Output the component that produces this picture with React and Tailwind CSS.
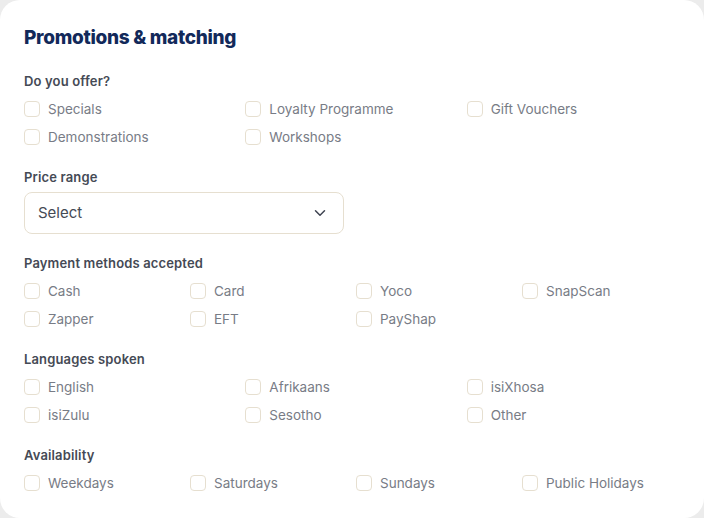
import React from 'react';
import { ChevronDown } from 'lucide-react';

const sections = {
  offer: ['Specials', 'Loyalty Programme', 'Gift Vouchers', 'Demonstrations', 'Workshops'],
  payment: ['Cash', 'Card', 'Yoco', 'SnapScan', 'Zapper', 'EFT', 'PayShap'],
  languages: ['English', 'Afrikaans', 'isiXhosa', 'isiZulu', 'Sesotho', 'Other'],
  availability: ['Weekdays', 'Saturdays', 'Sundays', 'Public Holidays'],
};

const Label = ({ children, className = '' }) => (
  <div className={`text-[13px] leading-5 font-semibold text-[#454a55] tracking-[0.15px] ${className}`}>{children}</div>
);

const CheckItem = ({ label }) => (
  <label className="flex items-center gap-2 h-7 cursor-pointer">
    <span className="w-4 h-4 rounded-[4px] border border-[#e6dfd0] bg-white shrink-0" />
    <span className="text-[13.5px] text-[#787c86]">{label}</span>
  </label>
);

const CheckGroup = ({ items, cols }) => (
  <div className={`grid w-[664px] mt-1 ${cols === 4 ? 'grid-cols-4' : 'grid-cols-3'}`}>
    {items.map((item) => (
      <CheckItem key={item} label={item} />
    ))}
  </div>
);

export default function App() {
  return (
    <div className="min-h-screen bg-[#ececec]" style={{ fontFamily: 'Inter, "Noto Sans", sans-serif' }}>
      <div className="h-[518px] w-full bg-white rounded-[20px] px-6 pt-6 overflow-hidden">
        {/* Heading */}
        <h2 className="text-[19px] leading-7 font-extrabold text-[#12295a] tracking-[-0.3px]">
          Promotions &amp; matching
        </h2>

        {/* Do you offer */}
        <Label className="mt-[19px]">Do you offer?</Label>
        <CheckGroup items={sections.offer} cols={3} />

        {/* Price range */}
        <Label className="mt-4">Price range</Label>
        <button className="mt-[5px] w-[320px] h-[42px] flex items-center justify-between px-3 border border-[#e6dfd0] rounded-lg bg-white">
          <span className="text-[15px] text-[#454a55] pl-px">Select</span>
          <ChevronDown className="w-[18px] h-[18px] text-[#3f4451] mr-[2px]" strokeWidth={2} />
        </button>

        {/* Payment */}
        <Label className="mt-[19px]">Payment methods accepted</Label>
        <CheckGroup items={sections.payment} cols={4} />

        {/* Languages */}
        <Label className="mt-4">Languages spoken</Label>
        <CheckGroup items={sections.languages} cols={3} />

        {/* Availability */}
        <Label className="mt-4">Availability</Label>
        <CheckGroup items={sections.availability} cols={4} />
      </div>
    </div>
  );
}
